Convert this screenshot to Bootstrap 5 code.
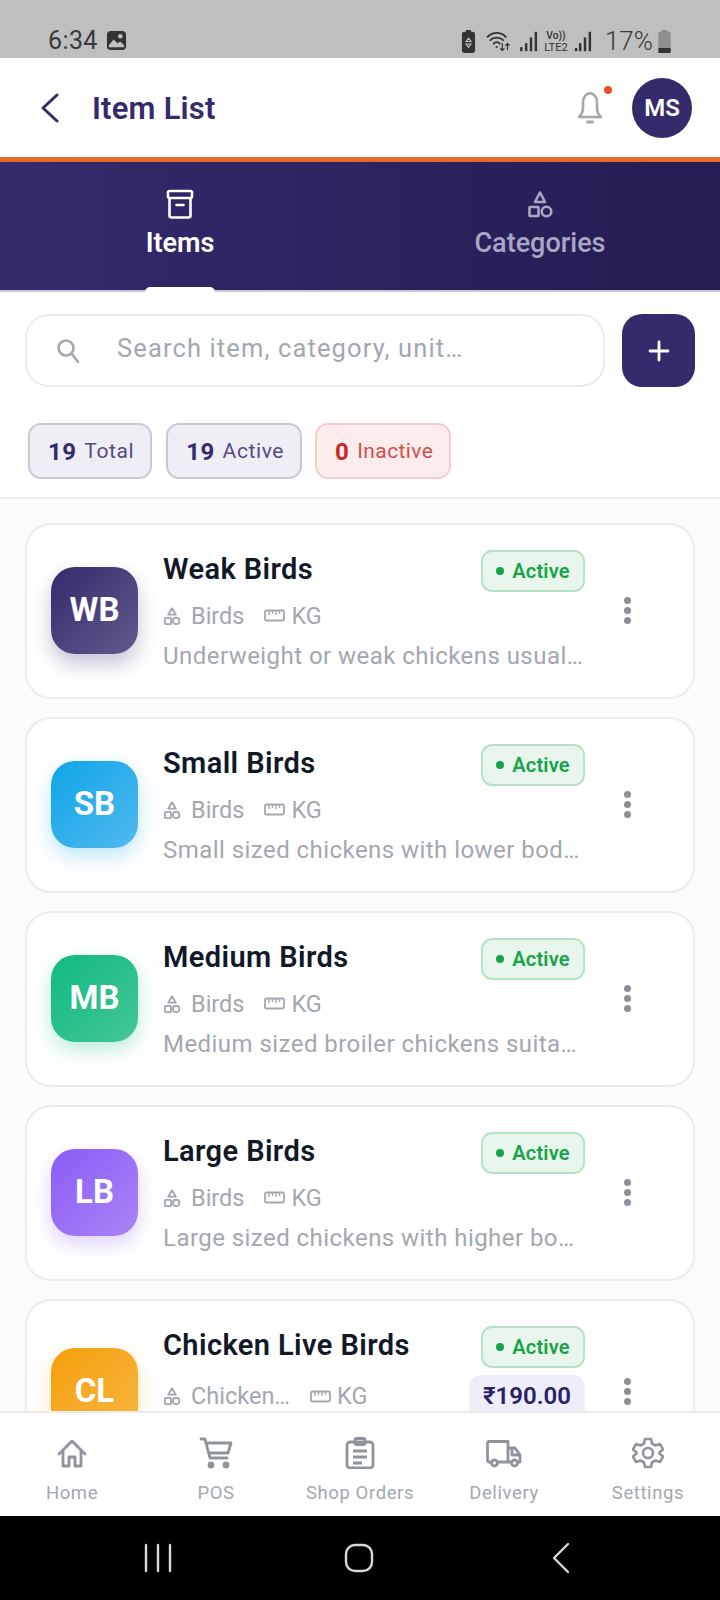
<!DOCTYPE html>
<html lang="en">
<head>
<meta charset="utf-8">
<title>Item List</title>
<link href="https://cdn.jsdelivr.net/npm/bootstrap@5.3.0/dist/css/bootstrap.min.css" rel="stylesheet">
<style>
html,body{margin:0;height:1600px;overflow:hidden}
body{font-family:Roboto,"Liberation Sans",sans-serif;background:#fff}
svg{display:block;flex:none}
.shell{width:720px;height:1600px}
.shell>*{flex:none}
.sysbar{height:58px;background:#bfbfbf;color:#3a3a3a;padding:26px 49px 0 48px}
.sys-time{font-size:25px;line-height:30px;letter-spacing:.4px}
.sys-pct{font-size:26px;line-height:30px;margin-left:13px;margin-right:5px;font-weight:300}
.sys-icons{height:30px}
.topbar{height:99px;padding:0 28px 0 40px}
.top-title{font-size:31px;font-weight:600;color:#352a6c;margin-left:32px;margin-top:3px;letter-spacing:.2px}
.bell-wrap{width:30px;height:36px;margin-right:27px;margin-top:1px}
.bell-dot{position:absolute;right:-7px;top:-4px;width:8px;height:8px;border-radius:50%;background:#e4502a}
.me{width:60px;height:60px;border-radius:50%;background:#352a6c;color:#fff;font-size:24px;font-weight:600}
.band{height:135px;border-top:5px solid #e8682a;border-bottom:2px solid #c9c6da;background:linear-gradient(90deg,#352a6c,#241c52)}
.tab-item{width:360px;padding-top:27px;color:#aaa6c6;font-size:27px;line-height:32px;font-weight:500}
.tab-item svg{margin-bottom:8px}
.tab-on{color:#fff;font-weight:600}
.tab-mark{position:absolute;left:145px;bottom:-2px;width:70px;height:5px;background:#fff;border-radius:6px 6px 0 0}
.search-row{padding:22px 25px 0;gap:17px}
.search-box{height:73px;border:2px solid #ececee;border-radius:24px;padding-left:29px;color:#a3a7b0;font-size:25.5px;letter-spacing:1.12px}
.search-box span{margin-left:37px;margin-top:-4px}
.add-btn{width:73px;height:73px;border-radius:20px;background:#352a6c;border:0;padding:0}
.pill-row{padding:36px 28px 18px;gap:14px;border-bottom:2px solid #ececee}
.stat{height:56px;padding:2px 16px 0 18px;border:2px solid #c9c9d6;background:#eeeef4;border-radius:13px;color:#544b85;font-size:21px;letter-spacing:.6px}
.stat b{font-size:24px;font-weight:700;margin-right:8px;letter-spacing:.4px;color:#352a6c}
.stat-off{margin-left:-1px;background:#fdecec;border-color:#f6cdcd;color:#d44d4d;letter-spacing:.4px}
.stat-off b{color:#c62828}
.list-area{flex:1 1 0 !important;background:#fbfbfc;padding:24px 25px 0;gap:18px;overflow:hidden;min-height:0}
.item{flex:none;height:176px;background:#fff;border:2px solid #ececee;border-radius:26px;padding:0 24px 2px 24px}
.item-tall{height:186px}
.tile{width:87px;height:87px;border-radius:24px;color:#fff;font-size:33px;font-weight:700;flex:none;margin-right:25px}
.t-wb{background:linear-gradient(135deg,#352a6c,#625a8e);box-shadow:0 10px 20px rgba(53,42,108,.28)}
.t-sb{background:linear-gradient(135deg,#0ea5e9,#52b9ee);box-shadow:0 8px 20px rgba(14,165,233,.28)}
.t-mb{background:linear-gradient(135deg,#10b981,#45c795);box-shadow:0 8px 20px rgba(16,185,129,.28)}
.t-lb{background:linear-gradient(135deg,#8b5cf6,#a885f8);box-shadow:0 8px 20px rgba(139,92,246,.28)}
.t-cl{background:linear-gradient(135deg,#f59e0b,#f8b744);box-shadow:0 8px 20px rgba(245,158,11,.28)}
.body-col{width:422px;flex:none}
.item-tall .body-col{align-self:flex-start;padding-top:25px}
.item-tall .meta{margin-top:13px}
.name{font-size:29px;line-height:41px;font-weight:600;color:#111827;letter-spacing:.4px;margin-top:-3px}
.state{width:104px;height:42px;border:2px solid #b6e2c6;background:#e8f6ec;border-radius:11px;color:#16a34a;font-size:20px;font-weight:600;flex:none;letter-spacing:.2px}
.state i{width:8px;height:8px;border-radius:50%;background:#16a34a;margin-right:8px}
.meta{color:#a3a7b0;font-size:23.5px;line-height:30px;margin-top:9px}
.meta svg{margin-right:10px}
.meta .gap{margin-left:20px;margin-right:6px}
.price{position:relative;height:42px;width:116px;background:#eeeef8;border-radius:12px 12px 0 0;color:#2b2266;font-size:24px;font-weight:600;margin-top:-6px;margin-bottom:-6px}
.desc{color:#a3a7b0;font-size:24px;line-height:30px;margin-top:10px;letter-spacing:.45px;white-space:nowrap;overflow:hidden}
.dots{margin-left:39px;gap:3px}
.dots i{width:7px;height:7px;border-radius:50%;background:#8a8f98}
.tabbar{height:105px;border-top:2px solid #ececee;background:#fff;padding-top:24px;position:relative}
.nav-cell{flex:1 1 0;color:#a3a7b0;font-size:18.5px;line-height:24px;letter-spacing:.6px;gap:12px}
.nav-cell svg{height:32px}
.softkeys{height:84px;background:#000}
</style>
</head>
<body>
<div class="shell d-flex flex-column">
  <div class="sysbar d-flex align-items-start">
    <span class="sys-time">6:34</span>
    <svg class="ms-2 mt-1" width="21" height="21" viewBox="0 0 22 22"><rect x="1" y="1" width="20" height="20" rx="4" fill="#333"/><circle cx="15" cy="6.500" r="2.400" fill="#bfbfbf"/><path d="M3 16l5-6 4 4 3-2 4 4v2H3z" fill="#bfbfbf"/></svg>
    <div class="ms-auto d-flex align-items-center sys-icons">
      <svg width="15" height="23" viewBox="0 0 16 28"><rect x="5" y="0" width="6" height="3" fill="#333"/><rect x="0" y="2" width="16" height="26" rx="3" fill="#333"/><path d="M8 10l3 4H5zM5 17h6l-3 4z" fill="none" stroke="#bfbfbf" stroke-width="1.400"/></svg>
      <svg class="ms-2" width="28" height="24" viewBox="0 0 28 28" fill="none" stroke="#333" stroke-width="2.200" stroke-linecap="round"><path d="M2 9c6-6 15-6 21 0M5 13c4-4 11-4 15 0M9 17c2-2 5-2 7 0"/><circle cx="12.500" cy="21" r="1.300" fill="#333" stroke="none"/><path d="M19 17v8M17 23l2 2 2-2M25 24v-7M23 19l2-2 2 2" stroke-width="1.400"/></svg>
      <svg class="ms-2" width="18" height="21" viewBox="0 0 22 26" fill="#333"><rect x="0" y="20" width="3" height="5"/><rect x="6" y="15" width="3" height="10"/><rect x="12" y="8" width="3" height="17"/><rect x="18" y="1" width="3" height="24"/></svg>
      <svg class="ms-1" width="28" height="24" viewBox="0 0 30 28"><text x="15" y="12" text-anchor="middle" font-family="Roboto,sans-serif" font-size="12" font-weight="500" fill="#333">Vo))</text><text x="15" y="26" text-anchor="middle" font-family="Roboto,sans-serif" font-size="13" fill="#333">LTE2</text></svg>
      <svg class="ms-1" width="18" height="21" viewBox="0 0 20 26" fill="#333"><rect x="0" y="21" width="3" height="4"/><rect x="5" y="15" width="3" height="10"/><rect x="11" y="8" width="3" height="17"/><rect x="17" y="1" width="3" height="24"/></svg>
      <span class="sys-pct">17%</span>
      <svg width="13" height="23" viewBox="0 0 15 28"><rect x="4" y="0" width="7" height="3" fill="#8a8a8a"/><rect x="0" y="2" width="15" height="26" rx="2" fill="#8f8f8f"/><rect x="0" y="22" width="15" height="6" rx="1" fill="#333"/></svg>
    </div>
  </div>

  <div class="topbar d-flex align-items-center">
    <svg width="20" height="30" viewBox="0 0 20 30" fill="none" stroke="#352a6c" stroke-width="3" stroke-linecap="round" stroke-linejoin="round"><path d="M17 2L3 15l14 13"/></svg>
    <span class="top-title">Item List</span>
    <div class="ms-auto position-relative bell-wrap">
      <svg width="30" height="36" viewBox="0 0 30 36" fill="none" stroke="#a3a7b0" stroke-width="2.600" stroke-linejoin="round" stroke-linecap="round"><path d="M15 3c-5 1-7 5-7 10v6c0 4-2 6-4 8h22c-2-2-4-4-4-8v-6c0-5-2-9-7-10z"/><path d="M12.500 32h5" stroke-width="3"/></svg>
      <span class="bell-dot"></span>
    </div>
    <div class="me d-flex align-items-center justify-content-center">MS</div>
  </div>

  <div class="band d-flex position-relative">
    <div class="tab-item tab-on d-flex flex-column align-items-center">
      <svg width="28" height="30" viewBox="0 0 28 30" fill="none" stroke="#fff" stroke-width="2.600" stroke-linejoin="round"><rect x="2" y="2" width="24" height="7" rx="1.500"/><path d="M3.500 9v17.500a2 2 0 0 0 2 2h17a2 2 0 0 0 2-2V9"/><path d="M10.500 16h7" stroke-linecap="round"/></svg>
      <span>Items</span>
    </div>
    <div class="tab-item d-flex flex-column align-items-center">
      <svg width="28" height="30" viewBox="0 0 28 30" fill="none" stroke="#aaa6c6" stroke-width="2.600" stroke-linejoin="round"><path d="M14 3.500l5 9.500H9z"/><rect x="3.500" y="18" width="9" height="9" rx=".5"/><circle cx="20.500" cy="22.500" r="4.800"/></svg>
      <span>Categories</span>
    </div>
    <span class="tab-mark"></span>
  </div>

  <div class="search-row d-flex">
    <div class="search-box flex-grow-1 d-flex align-items-center">
      <svg width="24" height="26" viewBox="0 0 24 26" fill="none" stroke="#a3a7b0" stroke-width="2.600" stroke-linecap="round"><circle cx="10" cy="10" r="7.500"/><path d="M16 16l6 8"/></svg>
      <span>Search item, category, unit…</span>
    </div>
    <button class="add-btn d-flex align-items-center justify-content-center" type="button" aria-label="Add">
      <svg width="22" height="22" viewBox="0 0 22 22" stroke="#fff" stroke-width="2.800" stroke-linecap="round"><path d="M11 2v18M2 11h18"/></svg>
    </button>
  </div>

  <div class="pill-row d-flex">
    <div class="stat d-flex align-items-center"><b>19</b>Total</div>
    <div class="stat d-flex align-items-center"><b>19</b>Active</div>
    <div class="stat stat-off d-flex align-items-center"><b>0</b>Inactive</div>
  </div>

  <div class="list-area d-flex flex-column">
    <div class="item d-flex align-items-center">
      <div class="tile t-wb d-flex align-items-center justify-content-center">WB</div>
      <div class="body-col">
        <div class="d-flex justify-content-between align-items-center"><span class="name">Weak Birds</span><span class="state d-flex align-items-center justify-content-center"><i></i>Active</span></div>
        <div class="meta d-flex align-items-center"><svg width="18" height="20" viewBox="0 0 28 30" fill="none" stroke="#a3a7b0" stroke-width="2.800" stroke-linejoin="round"><path d="M14 3l6 10H8z"/><rect x="3" y="18" width="9.500" height="9.500" rx="1"/><circle cx="20.500" cy="22.700" r="5"/></svg>Birds<svg class="gap" width="21" height="13" viewBox="0 0 21 13" fill="none" stroke="#a3a7b0" stroke-width="1.800"><rect x="1" y="1.500" width="19" height="10" rx="1.500"/><path d="M5 2v4M8.500 2v3M12 2v4M15.500 2v3" stroke-width="1.400"/></svg>KG</div>
        <div class="desc">Underweight or weak chickens usual…</div>
      </div>
      <div class="dots d-flex flex-column"><i></i><i></i><i></i></div>
    </div>

    <div class="item d-flex align-items-center">
      <div class="tile t-sb d-flex align-items-center justify-content-center">SB</div>
      <div class="body-col">
        <div class="d-flex justify-content-between align-items-center"><span class="name">Small Birds</span><span class="state d-flex align-items-center justify-content-center"><i></i>Active</span></div>
        <div class="meta d-flex align-items-center"><svg width="18" height="20" viewBox="0 0 28 30" fill="none" stroke="#a3a7b0" stroke-width="2.800" stroke-linejoin="round"><path d="M14 3l6 10H8z"/><rect x="3" y="18" width="9.500" height="9.500" rx="1"/><circle cx="20.500" cy="22.700" r="5"/></svg>Birds<svg class="gap" width="21" height="13" viewBox="0 0 21 13" fill="none" stroke="#a3a7b0" stroke-width="1.800"><rect x="1" y="1.500" width="19" height="10" rx="1.500"/><path d="M5 2v4M8.500 2v3M12 2v4M15.500 2v3" stroke-width="1.400"/></svg>KG</div>
        <div class="desc">Small sized chickens with lower bod…</div>
      </div>
      <div class="dots d-flex flex-column"><i></i><i></i><i></i></div>
    </div>

    <div class="item d-flex align-items-center">
      <div class="tile t-mb d-flex align-items-center justify-content-center">MB</div>
      <div class="body-col">
        <div class="d-flex justify-content-between align-items-center"><span class="name">Medium Birds</span><span class="state d-flex align-items-center justify-content-center"><i></i>Active</span></div>
        <div class="meta d-flex align-items-center"><svg width="18" height="20" viewBox="0 0 28 30" fill="none" stroke="#a3a7b0" stroke-width="2.800" stroke-linejoin="round"><path d="M14 3l6 10H8z"/><rect x="3" y="18" width="9.500" height="9.500" rx="1"/><circle cx="20.500" cy="22.700" r="5"/></svg>Birds<svg class="gap" width="21" height="13" viewBox="0 0 21 13" fill="none" stroke="#a3a7b0" stroke-width="1.800"><rect x="1" y="1.500" width="19" height="10" rx="1.500"/><path d="M5 2v4M8.500 2v3M12 2v4M15.500 2v3" stroke-width="1.400"/></svg>KG</div>
        <div class="desc">Medium sized broiler chickens suita…</div>
      </div>
      <div class="dots d-flex flex-column"><i></i><i></i><i></i></div>
    </div>

    <div class="item d-flex align-items-center">
      <div class="tile t-lb d-flex align-items-center justify-content-center">LB</div>
      <div class="body-col">
        <div class="d-flex justify-content-between align-items-center"><span class="name">Large Birds</span><span class="state d-flex align-items-center justify-content-center"><i></i>Active</span></div>
        <div class="meta d-flex align-items-center"><svg width="18" height="20" viewBox="0 0 28 30" fill="none" stroke="#a3a7b0" stroke-width="2.800" stroke-linejoin="round"><path d="M14 3l6 10H8z"/><rect x="3" y="18" width="9.500" height="9.500" rx="1"/><circle cx="20.500" cy="22.700" r="5"/></svg>Birds<svg class="gap" width="21" height="13" viewBox="0 0 21 13" fill="none" stroke="#a3a7b0" stroke-width="1.800"><rect x="1" y="1.500" width="19" height="10" rx="1.500"/><path d="M5 2v4M8.500 2v3M12 2v4M15.500 2v3" stroke-width="1.400"/></svg>KG</div>
        <div class="desc">Large sized chickens with higher bo…</div>
      </div>
      <div class="dots d-flex flex-column"><i></i><i></i><i></i></div>
    </div>

    <div class="item item-tall d-flex align-items-center">
      <div class="tile t-cl d-flex align-items-center justify-content-center">CL</div>
      <div class="body-col">
        <div class="d-flex justify-content-between align-items-center"><span class="name">Chicken Live Birds</span><span class="state d-flex align-items-center justify-content-center"><i></i>Active</span></div>
        <div class="meta d-flex align-items-center"><svg width="18" height="20" viewBox="0 0 28 30" fill="none" stroke="#a3a7b0" stroke-width="2.800" stroke-linejoin="round"><path d="M14 3l6 10H8z"/><rect x="3" y="18" width="9.500" height="9.500" rx="1"/><circle cx="20.500" cy="22.700" r="5"/></svg>Chicken…<svg class="gap" width="21" height="13" viewBox="0 0 21 13" fill="none" stroke="#a3a7b0" stroke-width="1.800"><rect x="1" y="1.500" width="19" height="10" rx="1.500"/><path d="M5 2v4M8.500 2v3M12 2v4M15.500 2v3" stroke-width="1.400"/></svg>KG<span class="price ms-auto d-flex align-items-center justify-content-center">₹190.00</span></div>
      </div>
      <div class="dots d-flex flex-column"><i></i><i></i><i></i></div>
    </div>
  </div>

  <div class="tabbar d-flex">
    <div class="nav-cell d-flex flex-column align-items-center">
      <svg width="32" height="32" viewBox="0 0 32 32" fill="none" stroke="#8e939c" stroke-width="2.800" stroke-linejoin="round" stroke-linecap="round"><path d="M3 17L16 4l13 13"/><path d="M7 13.500V29h6v-9h6v9h6V13.500"/></svg>
      <span>Home</span>
    </div>
    <div class="nav-cell d-flex flex-column align-items-center">
      <svg width="34" height="32" viewBox="0 0 34 32" fill="none" stroke="#8e939c" stroke-width="2.800" stroke-linejoin="round" stroke-linecap="round"><path d="M2 2h4l5 19h17"/><path d="M7 6h25l-3 10H10"/><circle cx="12" cy="28" r="2" fill="#8e939c"/><circle cx="27" cy="28" r="2" fill="#8e939c"/></svg>
      <span>POS</span>
    </div>
    <div class="nav-cell d-flex flex-column align-items-center">
      <svg width="30" height="32" viewBox="0 0 30 32" fill="none" stroke="#8e939c" stroke-width="2.800" stroke-linejoin="round"><rect x="2" y="5" width="26" height="26" rx="3"/><rect x="10" y="1.500" width="10" height="6" rx="1.500"/><path d="M8 14h14M8 20h14M8 26h9"/></svg>
      <span>Shop Orders</span>
    </div>
    <div class="nav-cell d-flex flex-column align-items-center">
      <svg width="36" height="32" viewBox="0 0 36 32" fill="none" stroke="#8e939c" stroke-width="2.800" stroke-linejoin="round"><path d="M6 25H3a1.500 1.500 0 0 1-1.500-1.500V6A1.500 1.500 0 0 1 3 4.500h19V25H11"/><path d="M22 11h7l5 7v7h-3M22 25h4"/><path d="M26 12v6h8"/><circle cx="8.500" cy="26" r="3"/><circle cx="28.500" cy="26" r="3"/></svg>
      <span>Delivery</span>
    </div>
    <div class="nav-cell d-flex flex-column align-items-center">
      <svg width="32" height="32" viewBox="0 0 32 32" fill="none" stroke="#8e939c" stroke-width="2.600" stroke-linejoin="round"><path d="M13 2h6l1 4.500 3.500 2L28 7l3 5.500-3.500 3v1l3.500 3-3 5.500-4.500-1.500-3.500 2L19 30h-6l-1-4.500-3.500-2L4 25l-3-5.500 3.500-3v-1L1 12.500 4 7l4.500 1.500 3.500-2z"/><circle cx="16" cy="16" r="5"/></svg>
      <span>Settings</span>
    </div>
  </div>

  <div class="softkeys d-flex align-items-center">
    <svg width="720" height="32" viewBox="0 0 720 32" fill="none" stroke="#d8d8d8" stroke-width="2.400" stroke-linecap="round" stroke-linejoin="round"><path d="M146 3v26M158 3v26M170 3v26"/><rect x="346" y="3" width="26" height="26" rx="9"/><path d="M568 2L554 16l14 14"/></svg>
  </div>
</div>
</body>
</html>
